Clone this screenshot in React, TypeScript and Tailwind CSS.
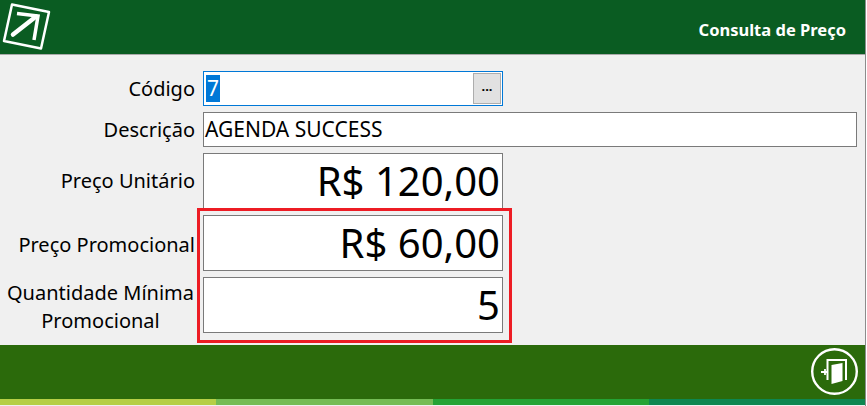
const labelClasses = "w-[195px] shrink-0 text-right text-[20px] leading-[27px] text-black";
const valueBoxClasses =
  "flex h-[56px] w-[300px] shrink-0 items-center justify-end border border-[#7a7a7a] bg-white pr-[2px] text-[40px] leading-none text-black";

function PriceRow({ label, value, top }: { label: string; value: string; top: string }) {
  return (
    <div className="flex items-start gap-2">
      <div className={`${labelClasses} ${top}`}>{label}</div>
      <div className={valueBoxClasses}>{value}</div>
    </div>
  );
}

export default function App() {
  return (
    <div
      className="flex h-[406px] w-[867px] overflow-hidden bg-[#f0f0f0]"
      style={{ fontFamily: '"Noto Sans", sans-serif' }}
    >
      <div className="flex h-[405px] w-[865px] shrink-0 flex-col">
        <header className="flex h-[55px] shrink-0 items-start justify-between border-b border-[#a9a9a9] bg-[#0a5c22] pr-[19px]">
          <svg width="54" height="54" viewBox="0 0 54 54" fill="none" stroke="white">
            <path d="M12 4.5 L49 12 L41 48.5 L4 41 Z" strokeWidth="2.5" strokeLinejoin="round" />
            <path d="M13 34.5 L36 16.5" strokeWidth="4.5" strokeLinecap="round" />
            <path d="M17 13.5 L38 16 L34 40" strokeWidth="3.5" strokeLinejoin="miter" />
          </svg>
          <h1 className="pt-[18px] text-[16.5px] font-bold leading-[24px] text-white">Consulta de Preço</h1>
        </header>

        <main className="relative flex flex-1 flex-col gap-[6px] pt-[16px]">
          <div className="flex items-start gap-2">
            <div className={`${labelClasses} pt-[4px]`}>Código</div>
            <div className="flex h-[35px] w-[300px] items-center justify-between border border-[#0078d7] bg-white pl-[2px] pr-[1px]">
              <span className="bg-[#0078d7] px-[1px] text-[21px] leading-[27px] text-white">7</span>
              <button className="flex h-[31px] w-[28px] items-center justify-center border border-[#adadad] bg-[#e1e1e1] pb-[5px] text-[13px] font-bold leading-none text-black">
                ...
              </button>
            </div>
          </div>

          <div className="flex items-start gap-2">
            <div className={`${labelClasses} pt-[4px]`}>Descrição</div>
            <div className="flex h-[35px] w-[654px] items-center border border-[#7a7a7a] bg-white pl-[1px] text-[21px] text-black">
              AGENDA SUCCESS
            </div>
          </div>

          <PriceRow label="Preço Unitário" value="R$ 120,00" top="pt-[14px]" />
          <PriceRow label="Preço Promocional" value="R$ 60,00" top="pt-[16px]" />

          <div className="flex items-start gap-2">
            <div className="w-[195px] shrink-0 whitespace-nowrap pl-[6px] pt-[2px] text-center text-[20px] leading-[28px] text-black">
              Quantidade Mínima
              <br />
              Promocional
            </div>
            <div className={valueBoxClasses}>5</div>
          </div>

          {/* destaque vermelho sobre os campos promocionais */}
          <div className="pointer-events-none absolute left-[197px] top-[153px] h-[135px] w-[315px] border-[3px] border-[#ed1c24]" />
        </main>

        <footer className="flex h-[54px] shrink-0 items-center justify-end bg-[#2b6a0b] pr-[6px]">
          <svg width="48" height="48" viewBox="0 0 48 48" fill="none">
            <circle cx="23.5" cy="23.5" r="22.3" stroke="white" strokeWidth="2.4" />
            <path d="M16.5 32 V12 H35 V32" stroke="white" strokeWidth="2" />
            <path d="M20.5 17 L31.5 15 V33 L20.5 36 Z" fill="white" />
            <path d="M10 24 H16 M14 21 V27" stroke="white" strokeWidth="1.8" />
          </svg>
        </footer>

        <div className="flex h-[6px] shrink-0">
          <div className="flex-1 bg-[#b5cf45]" />
          <div className="flex-1 bg-[#74bc54]" />
          <div className="flex-1 bg-[#24a334]" />
          <div className="flex-1 bg-[#0d8750]" />
        </div>
      </div>
      <div className="h-full w-px shrink-0 bg-[#8c8c8c]" />
      <div className="h-full w-px shrink-0 bg-white" />
    </div>
  );
}
